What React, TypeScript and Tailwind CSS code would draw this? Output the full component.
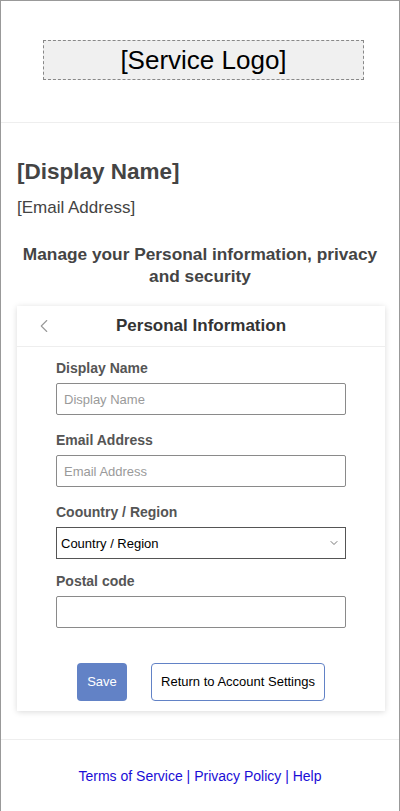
import { ChevronLeft, ChevronDown } from 'lucide-react';

const font = { fontFamily: '"Liberation Sans", Arial, sans-serif' };

function Field({ label, placeholder }: { label: string; placeholder?: string }) {
  return (
    <div className="flex flex-col">
      <label className="text-[14px] leading-[16px] font-bold text-[#555]">{label}</label>
      <input
        type="text"
        placeholder={placeholder}
        className="mt-[7px] h-[32px] w-full rounded-[2px] border border-[#8a8a8a] bg-white px-[7px] text-[13px] text-black outline-none placeholder:text-[#9a9a9a]"
      />
    </div>
  );
}

export default function App() {
  return (
    <div
      className="min-h-[900px] w-[400px] border-x border-t border-[#999] bg-white text-[#444]"
      style={font}
    >
      <header className="flex border-b border-[#eee] pt-[39px] pb-[42px] pl-[42px]">
        <div className="flex h-[40px] w-[321px] items-center justify-center border border-dashed border-[#888] bg-[#f0f0f0] text-[26px] leading-none text-black">
          [Service Logo]
        </div>
      </header>

      <section className="pl-4 pt-[35px]">
        <h1 className="text-[22.5px] leading-[28px] font-bold">[Display Name]</h1>
        <p className="mt-[12px] text-[17px] leading-[20px]">[Email Address]</p>
      </section>

      <h2 className="mt-[25px] px-4 text-center text-[17.3px] leading-[22px] font-bold">
        Manage your Personal information, privacy and security
      </h2>

      <div className="mt-[19px] ml-4 mr-[14px] bg-white shadow-[0_1px_6px_rgba(0,0,0,0.15)]">
        <div className="relative flex h-[41px] items-center justify-center border-b border-[#eee]">
          <ChevronLeft className="absolute left-[16px] top-[9px] h-[22px] w-[22px] text-[#999]" strokeWidth={1.2} />
          <span className="text-[17px] font-bold text-[#333]">Personal Information</span>
        </div>

        <form className="flex flex-col px-[39px] pt-[13px] pb-[10px]">
          <Field label="Display Name" placeholder="Display Name" />
          <div className="mt-[17px]">
            <Field label="Email Address" placeholder="Email Address" />
          </div>
          <div className="mt-[17px] flex flex-col">
            <label className="text-[14px] leading-[16px] font-bold text-[#555]">Coountry / Region</label>
            <div className="relative mt-[7px]">
              <select className="h-[32px] w-full appearance-none rounded-none border border-[#555] bg-white px-[4px] pt-[1px] text-[13px] text-black outline-none">
                <option>Country / Region</option>
              </select>
              <ChevronDown className="pointer-events-none absolute right-[6px] top-[10px] h-[12px] w-[12px] text-[#555]" strokeWidth={1.6} />
            </div>
          </div>
          <div className="mt-[14px]">
            <Field label="Postal code" />
          </div>

          <div className="mt-[35px] flex justify-center gap-[24px]">
            <button
              type="button"
              className="h-[38px] w-[50px] rounded-[4px] bg-[#6282c6] text-[13px] text-white"
            >
              Save
            </button>
            <button
              type="button"
              className="h-[38px] w-[174px] rounded-[4px] border border-[#6282c6] bg-white text-[13px] text-black"
            >
              Return to Account Settings
            </button>
          </div>
        </form>
      </div>

      <footer className="mt-[28px] border-t border-[#eee] pt-[27px] text-center text-[14px] leading-[18px] text-[#1a0dd6]">
        <a href="#">Terms of Service</a> | <a href="#">Privacy Policy</a> | <a href="#">Help</a>
      </footer>
    </div>
  );
}
